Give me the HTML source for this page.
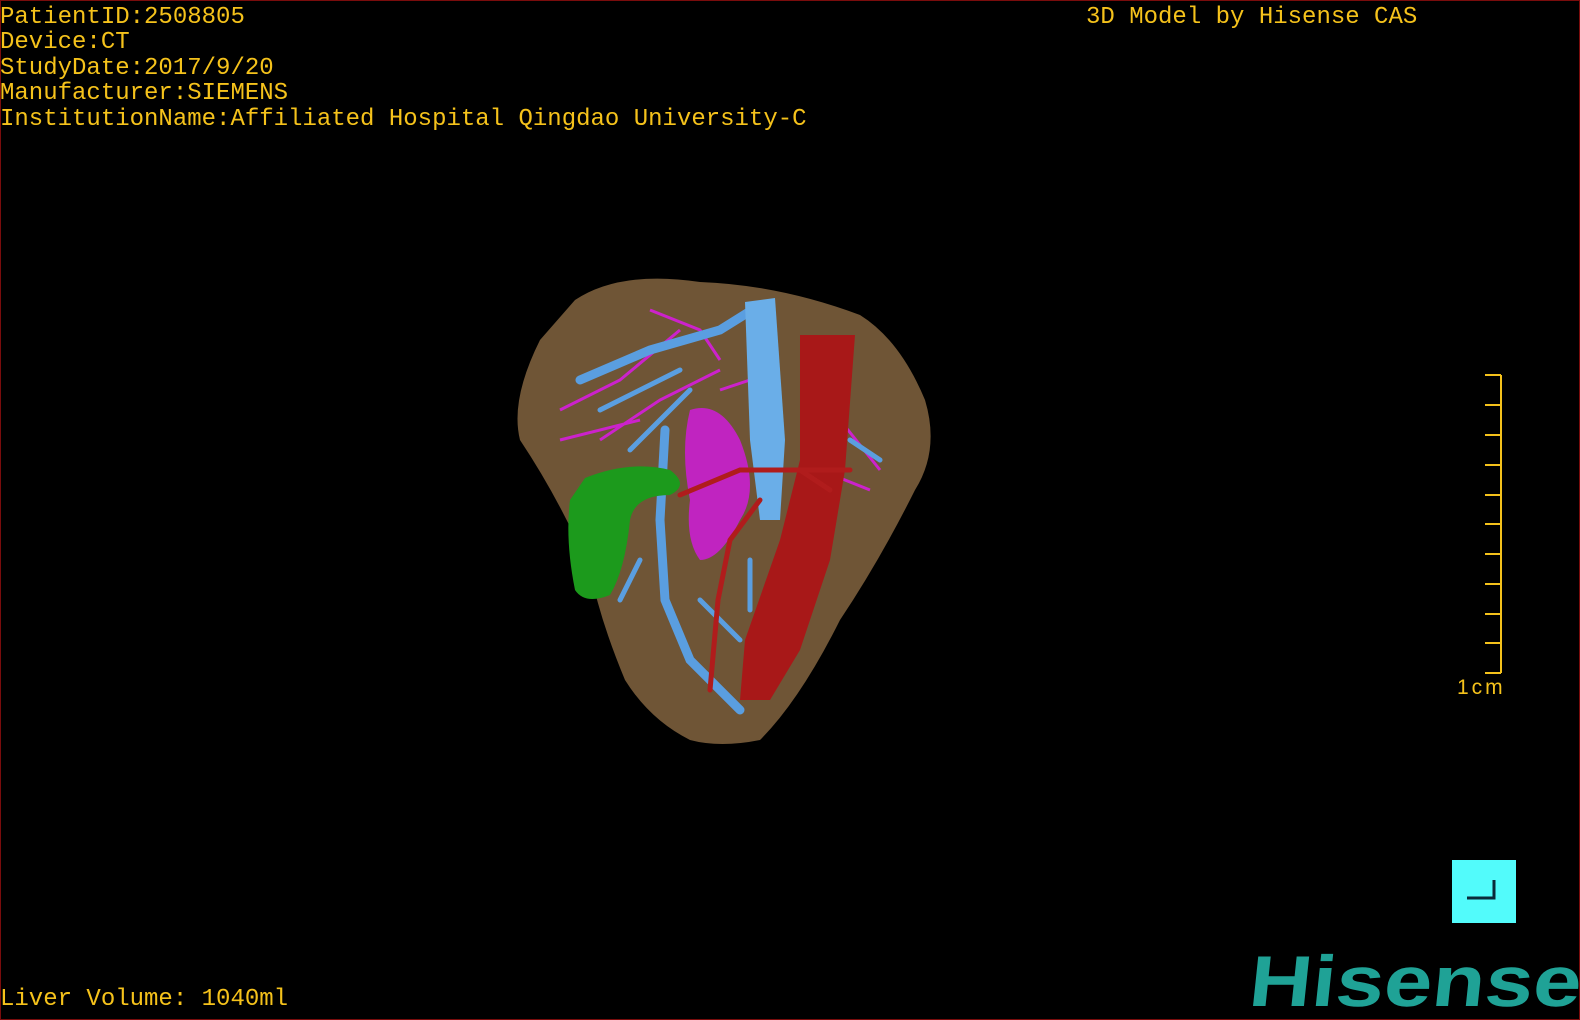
<!DOCTYPE html>
<html><head><meta charset="utf-8"><style>
html,body{margin:0;padding:0;background:#000;}
body{width:1580px;height:1020px;position:relative;overflow:hidden;}
.frame{position:absolute;left:0;top:0;width:1578px;height:1018px;border:1px solid #7a0c0c;}
.t{position:absolute;color:#f5c21b;font-family:"Liberation Mono",monospace;font-size:24px;line-height:25.4px;white-space:pre;letter-spacing:0;}
</style></head><body>
<div class="frame"></div>
<div class="t" style="left:0;top:5px">PatientID:2508805
Device:CT
StudyDate:2017/9/20
Manufacturer:SIEMENS
InstitutionName:Affiliated Hospital Qingdao University-C</div>
<div class="t" style="left:1086px;top:5px">3D Model by Hisense CAS</div>
<div class="t" style="left:0;top:987px">Liver Volume: 1040ml</div>
<div class="t" style="left:1457px;top:675px;font-family:'Liberation Sans',sans-serif;font-size:21px;letter-spacing:3px">1cm</div>
<svg width="1580" height="1020" style="position:absolute;left:0;top:0">
<g stroke="#f5c21b" stroke-width="2" fill="none">
<path d="M1501 375V673"/>
<path d="M1485 375H1501M1485 405H1501M1485 435H1501M1485 465H1501M1485 495H1501M1485 524H1501M1485 554H1501M1485 584H1501M1485 614H1501M1485 643H1501M1485 673H1501"/>
</g>
<path d="M575 300 Q620 270 700 282 Q780 285 860 315 Q900 340 925 400 Q940 450 915 490 Q880 560 840 620 Q800 700 760 740 Q720 748 690 740 Q650 720 625 680 Q600 620 590 570 Q560 500 520 440 Q510 400 540 340 Z" fill="#6f5536"/>
<g stroke="#cc22cc" stroke-width="3" fill="none">
<path d="M560 410 L620 380 L680 330 M600 440 L660 400 L720 370 M560 440 L640 420 M650 310 L700 330 L720 360 M720 390 L750 380 M840 420 L880 470 M820 470 L870 490"/>
</g>
<path d="M690 410 Q720 400 740 440 Q760 490 740 520 Q720 560 700 560 Q685 540 690 500 Q680 450 690 410Z" fill="#c024c0"/>
<g stroke="#5a9ee0" fill="none" stroke-linecap="round">
<path d="M665 430 L660 520 L665 600 L690 660 L740 710" stroke-width="9"/>
<path d="M580 380 L650 350 L720 330 L760 305" stroke-width="9"/>
<path d="M600 410 L680 370 M630 450 L690 390 M640 560 L620 600 M700 600 L740 640 M750 560 L750 610 M850 440 L880 460" stroke-width="5"/>
</g>
<path d="M745 302 L775 298 L785 440 L780 520 L760 520 L750 440 Z" fill="#6aaee8"/>
<path d="M800 335 L855 335 L845 470 L830 560 L800 650 L770 700 L740 700 L745 640 L780 540 L800 460 Z" fill="#a81818"/>
<g stroke="#b01c1c" fill="none" stroke-width="5" stroke-linecap="round">
<path d="M680 495 L740 470 L800 470 L830 490 M760 500 L730 540 L718 600 L710 690 M800 470 L850 470"/>
</g>
<path d="M585 478 Q630 460 670 470 Q690 485 670 495 Q635 495 630 520 Q625 570 610 595 Q585 605 575 590 Q565 540 570 500 Z" fill="#1c9a1c"/>
<rect x="1452" y="860" width="64" height="63" fill="#52fbfb"/>
<path d="M1467 898H1494V880" stroke="#0a2a3a" stroke-width="3" fill="none"/>
<text x="1248" y="1006" font-family="Liberation Sans,sans-serif" font-weight="bold" font-size="72" fill="#1fa296" textLength="332" lengthAdjust="spacingAndGlyphs" transform="skewX(-6) translate(105 0)">Hisense</text>
</svg>
</body></html>
